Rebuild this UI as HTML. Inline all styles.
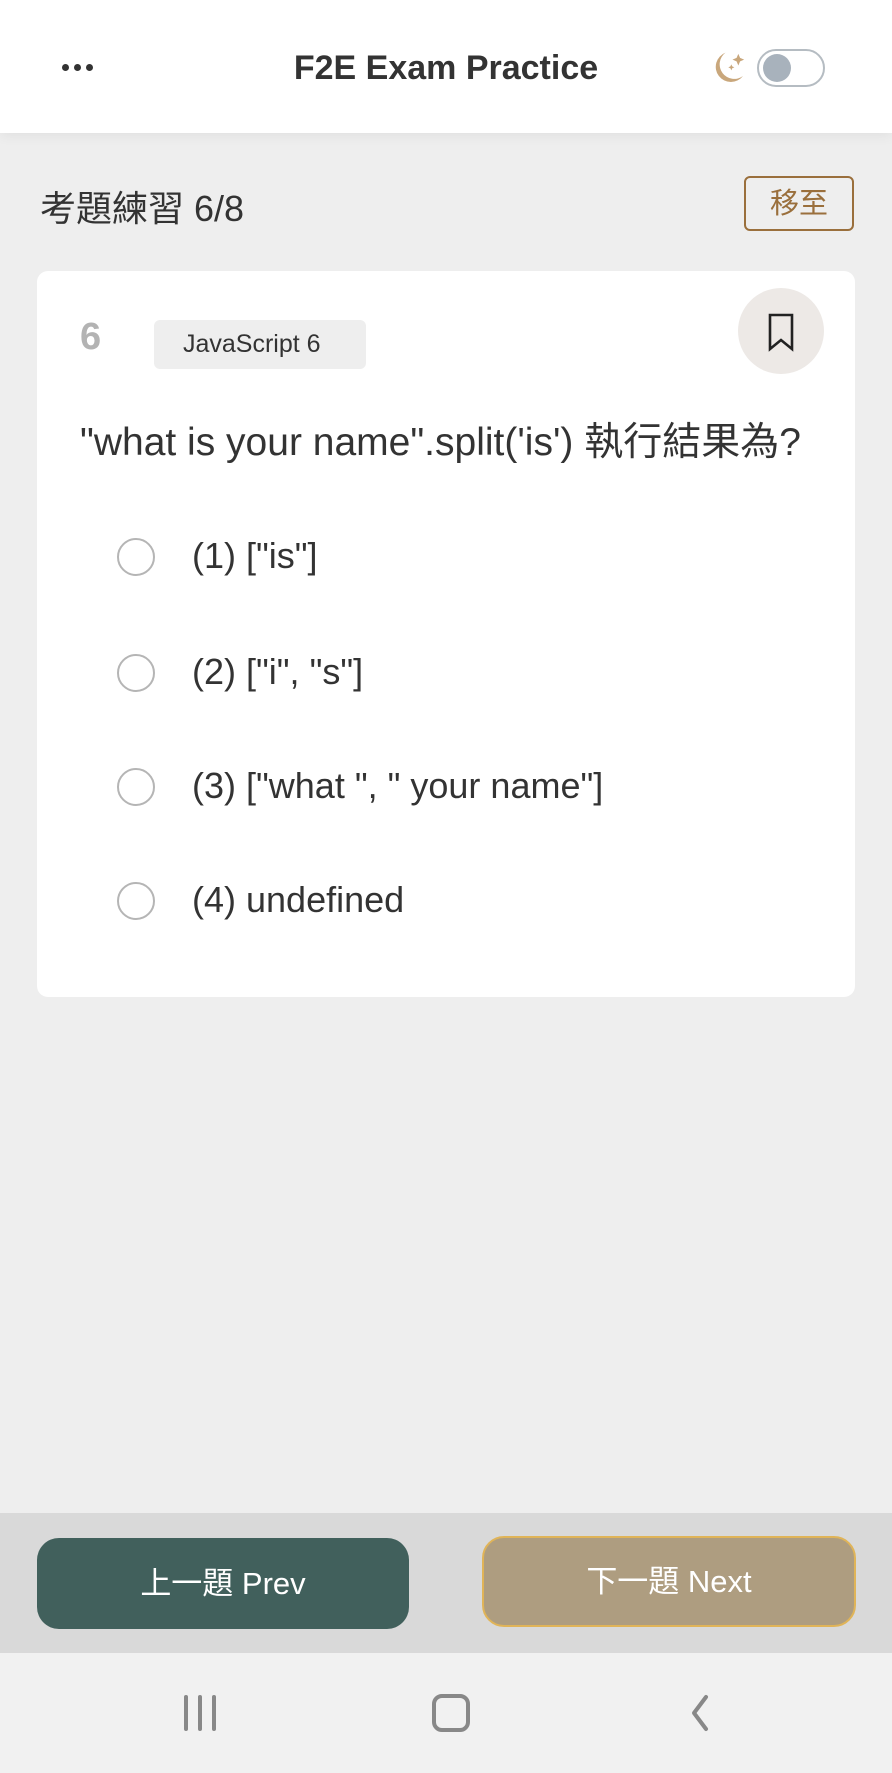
<!DOCTYPE html>
<html><head><meta charset="utf-8"><style>
*{margin:0;padding:0;box-sizing:border-box}
body{width:892px;height:1773px;background:#eeeeee;font-family:"Liberation Sans","Noto Sans CJK TC",sans-serif;position:relative;overflow:hidden;color:#333}
.abs{position:absolute}
.hdr{left:0;top:0;width:892px;height:133px;background:#fff;box-shadow:0 3px 12px rgba(0,0,0,.06)}
.title{left:0;width:892px;top:49px;text-align:center;font-size:34px;font-weight:bold;color:#333}
.card{left:37px;top:271px;width:818px;height:726px;background:#fff;border-radius:11px}
.radio{width:38px;height:38px;border:2px solid #b5b5b5;border-radius:50%;left:117px}
.opt{left:192px;font-size:36px;color:#333}
.btn{height:91px;border-radius:22px;color:#fff;font-size:31px;text-align:center;line-height:91px}
</style></head><body>
<div class="abs hdr"></div>
<div class="abs" style="left:62px;top:64px;width:34px;height:8px">
<span class="abs" style="left:0;top:0;width:7px;height:7px;border-radius:50%;background:#333"></span>
<span class="abs" style="left:12px;top:0;width:7px;height:7px;border-radius:50%;background:#333"></span>
<span class="abs" style="left:24px;top:0;width:7px;height:7px;border-radius:50%;background:#333"></span>
</div>
<div class="abs title">F2E Exam Practice</div>
<svg class="abs" style="left:708px;top:48px" width="42" height="42" viewBox="0 0 36 36">
<path d="M15 4 A13 13 0 1 0 30 24 A11 11 0 0 1 15 4Z" fill="#c9a77c"/>
<path d="M26 5 l1.5 3.5 3.5 1.5 -3.5 1.5 -1.5 3.5 -1.5 -3.5 -3.5 -1.5 3.5 -1.5z" fill="#c9a77c"/>
<path d="M20 14 l.8 1.8 1.8.8 -1.8.8 -.8 1.8 -.8-1.8 -1.8-.8 1.8-.8z" fill="#c9a77c"/>
</svg>
<div class="abs" style="left:757px;top:49px;width:68px;height:38px;border:2px solid #b5bcc2;border-radius:19px;background:#fff"></div>
<div class="abs" style="left:763px;top:54px;width:28px;height:28px;border-radius:50%;background:#a8b2bc"></div>
<div class="abs" style="left:40px;top:180px;font-size:36px;color:#333">考題練習 6/8</div>
<div class="abs" style="left:744px;top:176px;width:110px;height:55px;border:2px solid #9a6f3c;border-radius:6px;color:#9a6f3c;font-size:29px;text-align:center;line-height:53px">移至</div>
<div class="abs card"></div>
<div class="abs" style="left:80px;top:316px;font-size:38px;font-weight:bold;color:#b3b3b3">6</div>
<div class="abs" style="left:154px;top:320px;width:212px;height:49px;background:#eeeeee;border-radius:6px;font-size:25px;line-height:49px;padding-left:29px;color:#333">JavaScript 6</div>
<div class="abs" style="left:738px;top:288px;width:86px;height:86px;border-radius:50%;background:#ede9e6"></div>
<svg class="abs" style="left:766px;top:312px" width="30" height="40" viewBox="0 0 30 40"><path d="M4 3 H26 V37 L15 28 L4 37 Z" fill="none" stroke="#222" stroke-width="2.6" stroke-linejoin="miter"/></svg>
<div class="abs" style="left:80px;top:411px;font-size:39px;color:#333">"what is your name".split('is') 執行結果為?</div>
<div class="abs radio" style="top:538px"></div><div class="abs opt" style="top:535px">(1) ["is"]</div>
<div class="abs radio" style="top:654px"></div><div class="abs opt" style="top:651px">(2) ["i", "s"]</div>
<div class="abs radio" style="top:768px"></div><div class="abs opt" style="top:765px">(3) ["what ", " your name"]</div>
<div class="abs radio" style="top:882px"></div><div class="abs opt" style="top:879px">(4) undefined</div>
<div class="abs" style="left:0;top:1513px;width:892px;height:140px;background:#d9d9d9"></div>
<div class="abs btn" style="left:37px;top:1538px;width:372px;background:#41605c">上一題 Prev</div>
<div class="abs btn" style="left:482px;top:1536px;width:374px;background:#ae9d80;border:2px solid #e0b458;line-height:87px">下一題 Next</div>
<div class="abs" style="left:0;top:1653px;width:892px;height:120px;background:#f1f1f1"></div>
<svg class="abs" style="left:180px;top:1693px" width="42" height="40"><g stroke="#888" stroke-width="4" stroke-linecap="round"><path d="M6 4V36M20 4V36M34 4V36"/></g></svg>
<div class="abs" style="left:432px;top:1694px;width:38px;height:38px;border:4px solid #888;border-radius:10px"></div>
<svg class="abs" style="left:686px;top:1693px" width="30" height="40"><path d="M20 4 L8 20 L20 36" fill="none" stroke="#888" stroke-width="4" stroke-linecap="round" stroke-linejoin="round"/></svg>
</body></html>
